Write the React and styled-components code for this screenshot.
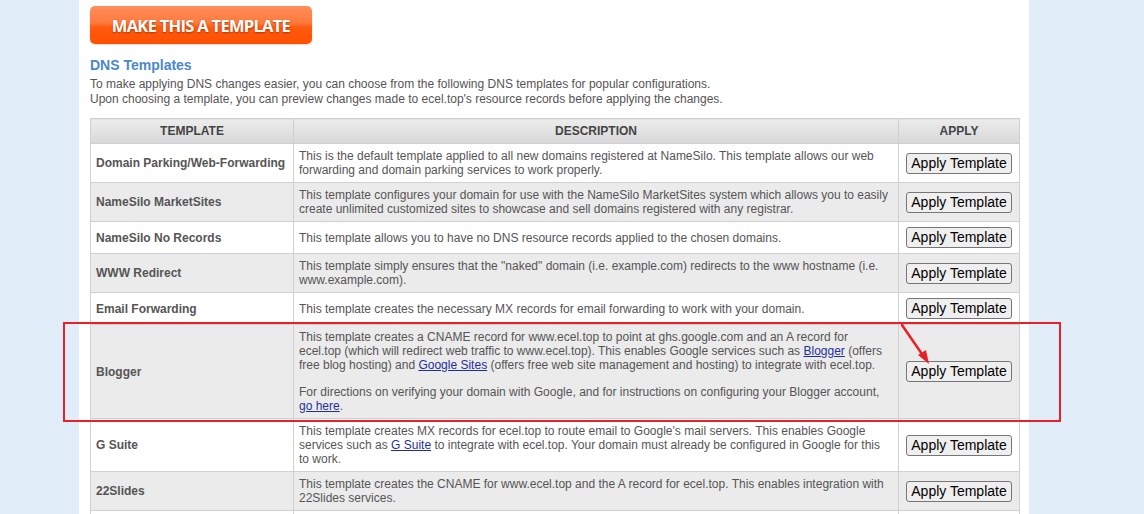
import styled, { createGlobalStyle } from 'styled-components'

const GlobalStyle = createGlobalStyle`
  html, body {
    margin: 0;
    padding: 0;
    background: #e1edf9;
  }
  body {
    font-family: "Liberation Sans", Arial, sans-serif;
  }
`

const Page = styled.div`
  position: relative;
  min-height: 514px;
`

const Panel = styled.main`
  width: 950px;
  margin-left: 79px;
  min-height: 600px;
  background: #fff;
  padding: 6px 10px 20px 11px;
  box-sizing: border-box;
`

const OrangeButton = styled.button`
  display: flex;
  align-items: center;
  justify-content: center;
  width: 222px;
  height: 38px;
  border: none;
  border-radius: 5px;
  background: linear-gradient(to bottom, #ff8e5c 0%, #ff7a3c 45%, #ff5a10 55%, #ff5000 100%);
  color: #fff;
  font-family: "Open Sans", "Liberation Sans", sans-serif;
  font-weight: 700;
  font-size: 16.5px;
  letter-spacing: -0.7px;
  text-shadow: 0 1px 2px rgba(120, 30, 0, 0.6);
  box-shadow: 0 1px 2px rgba(0, 0, 0, 0.15);
  padding: 0;
`

const Heading = styled.h2`
  margin: 13px 0 3px;
  font-size: 14px;
  font-weight: 700;
  color: #4a88ca;
  line-height: 17px;
`

const Intro = styled.p`
  margin: 0 0 11px;
  font-size: 12px;
  line-height: 15px;
  color: #555;
`

const Table = styled.table`
  width: 929px;
  border-collapse: collapse;
  table-layout: fixed;
  font-size: 12px;
  color: #555;
`

const Th = styled.th`
  height: 24px;
  padding: 0;
  border: 1px solid #cfcfcf;
  background: linear-gradient(to bottom, #ececec, #d8d8d8);
  color: #444;
  font-weight: 700;
  font-size: 12px;
  text-align: center;
  width: ${(p) => p.$w}px;
`

const Row = styled.tr`
  background: ${(p) => (p.$alt ? '#ebebeb' : '#fff')};
`

const Td = styled.td`
  border: 1px solid #d0d0d0;
  padding: 5px 8px 5px 5px;
  vertical-align: middle;
  line-height: 14px;
`

const NameCell = styled(Td)`
  font-weight: 700;
  padding: 5px 0 5px 5px;
  white-space: nowrap;
`

const ApplyCell = styled(Td)`
  padding: 5px 0;
`

const Para = styled.p`
  margin: 0 0 13px;
  &:last-child {
    margin: 0;
  }
`

const Link = styled.a`
  color: #1f2f9c;
  text-decoration: underline;
`

const ApplyButton = styled.button`
  display: block;
  margin: 0 auto;
  font-family: "Liberation Sans", Arial, sans-serif;
  font-size: 14px;
  color: #000;
  height: 21px;
  padding: 0 4px;
  line-height: 17px;
  background: #efefef;
  border: 1px solid #767676;
  border-radius: 3px;
`

const Highlight = styled.div`
  position: absolute;
  left: 63px;
  top: 322px;
  width: 998px;
  height: 100px;
  box-sizing: border-box;
  border: 2px solid #e8202a;
  pointer-events: none;
`

const Arrow = styled.svg`
  position: absolute;
  left: 896px;
  top: 320px;
  pointer-events: none;
`

const templates = [
  {
    name: 'Domain Parking/Web-Forwarding',
    desc: [
      'This is the default template applied to all new domains registered at NameSilo. This template allows our web forwarding and domain parking services to work properly.',
    ],
  },
  {
    name: 'NameSilo MarketSites',
    desc: [
      'This template configures your domain for use with the NameSilo MarketSites system which allows you to easily create unlimited customized sites to showcase and sell domains registered with any registrar.',
    ],
  },
  {
    name: 'NameSilo No Records',
    desc: ['This template allows you to have no DNS resource records applied to the chosen domains.'],
  },
  {
    name: 'WWW Redirect',
    desc: [
      'This template simply ensures that the "naked" domain (i.e. example.com) redirects to the www hostname (i.e. www.example.com).',
    ],
  },
  {
    name: 'Email Forwarding',
    desc: ['This template creates the necessary MX records for email forwarding to work with your domain.'],
  },
  {
    name: 'Blogger',
    desc: [
      <>
        This template creates a CNAME record for www.ecel.top to point at ghs.google.com and an A record for
        ecel.top (which will redirect web traffic to www.ecel.top). This enables Google services such as{' '}
        <Link href='#'>Blogger</Link> (offers free blog hosting) and <Link href='#'>Google Sites</Link> (offers
        free web site management and hosting) to integrate with ecel.top.
      </>,
      <>
        For directions on verifying your domain with Google, and for instructions on configuring your Blogger
        account, <Link href='#'>go here</Link>.
      </>,
    ],
  },
  {
    name: 'G Suite',
    desc: [
      <>
        This template creates MX records for ecel.top to route email to Google's mail servers. This enables Google
        services such as <Link href='#'>G Suite</Link> to integrate with ecel.top. Your domain must already be
        configured in Google for this
        <br />
        to work.
      </>,
    ],
  },
  {
    name: '22Slides',
    desc: [
      'This template creates the CNAME for www.ecel.top and the A record for ecel.top. This enables integration with 22Slides services.',
    ],
  },
  {
    name: 'Shopify',
    desc: [
      'This template creates the CNAME for www.ecel.top and the A record for ecel.top. This enables integration with Shopify services.',
    ],
  },
]

const App = () => {
  return (
    <Page>
      <GlobalStyle />
      <Panel>
        <OrangeButton>MAKE THIS A TEMPLATE</OrangeButton>
        <Heading>DNS Templates</Heading>
        <Intro>
          To make applying DNS changes easier, you can choose from the following DNS templates for popular
          configurations.
          <br />
          Upon choosing a template, you can preview changes made to ecel.top's resource records before applying the
          changes.
        </Intro>
        <Table>
          <thead>
            <tr>
              <Th $w={202}>TEMPLATE</Th>
              <Th $w={604}>DESCRIPTION</Th>
              <Th $w={120}>APPLY</Th>
            </tr>
          </thead>
          <tbody>
            {templates.map((t, i) => (
              <Row key={t.name} $alt={i % 2 === 1}>
                <NameCell>{t.name}</NameCell>
                <Td>
                  {t.desc.map((d, j) => (
                    <Para key={j}>{d}</Para>
                  ))}
                </Td>
                <ApplyCell>
                  <ApplyButton>Apply Template</ApplyButton>
                </ApplyCell>
              </Row>
            ))}
          </tbody>
        </Table>
      </Panel>

      <Highlight />
      <Arrow width='40' height='50' viewBox='0 0 40 50'>
        <line x1='6' y1='5' x2='28' y2='37' stroke='#e8202a' strokeWidth='2.5' strokeLinecap='round' />
        <polygon points='33,44 22,35 30,30' fill='#e8202a' />
      </Arrow>
    </Page>
  )
}

export default App
